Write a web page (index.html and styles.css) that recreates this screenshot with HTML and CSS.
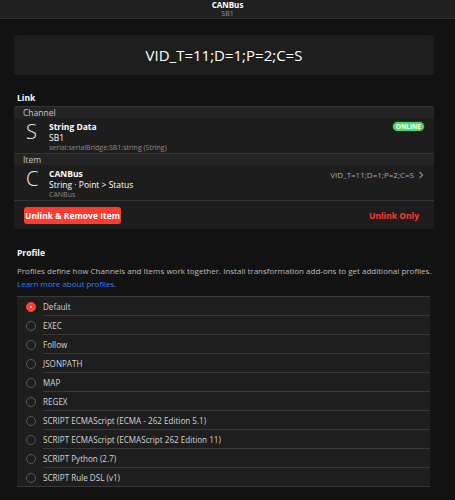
FILE: index.html
```html
<!DOCTYPE html>
<html>
<head>
<meta charset="utf-8">
<link rel="stylesheet" href="styles.css">
</head>
<body>
<header class="topbar">
  <div class="topbar-title">CANBus</div>
  <div class="topbar-sub">SB1</div>
</header>
<main class="page">
  <div class="value-card">VID_T=11;D=1;P=2;C=S</div>

  <div class="section-label">Link</div>
  <div class="link-card">
    <div class="group-head">Channel</div>
    <div class="link-row">
      <div class="letter">S</div>
      <div class="link-text">
        <div class="link-title">String Data</div>
        <div class="link-sub">SB1</div>
        <div class="link-foot">serial:serialBridge:SB1:string (String)</div>
      </div>
      <div class="badge">ONLINE</div>
    </div>
    <div class="group-head">Item</div>
    <div class="link-row">
      <div class="letter">C</div>
      <div class="link-text">
        <div class="link-title">CANBus</div>
        <div class="link-sub">String · Point &gt; Status</div>
        <div class="link-foot">CANBus</div>
      </div>
      <div class="link-value">VID_T=11;D=1;P=2;C=S
        <svg class="chev" width="6" height="8" viewBox="0 0 6 8"><path d="M1.5 1 L4.5 4 L1.5 7" fill="none" stroke="#8a8a8a" stroke-width="1.2"/></svg>
      </div>
    </div>
    <div class="actions">
      <button class="btn-danger">Unlink &amp; Remove Item</button>
      <button class="btn-link">Unlink Only</button>
    </div>
  </div>

  <div class="profile">
    <div class="section-label profile-label">Profile</div>
    <p class="desc">Profiles define how Channels and Items work together. Install transformation add-ons to get additional profiles.<br><a class="learn" href="#">Learn more about profiles.</a></p>
    <ul class="radio-list">
      <li class="radio-row selected"><span class="radio"></span><span class="radio-label">Default</span></li>
      <li class="radio-row"><span class="radio"></span><span class="radio-label">EXEC</span></li>
      <li class="radio-row"><span class="radio"></span><span class="radio-label">Follow</span></li>
      <li class="radio-row"><span class="radio"></span><span class="radio-label">JSONPATH</span></li>
      <li class="radio-row"><span class="radio"></span><span class="radio-label">MAP</span></li>
      <li class="radio-row"><span class="radio"></span><span class="radio-label">REGEX</span></li>
      <li class="radio-row"><span class="radio"></span><span class="radio-label">SCRIPT ECMAScript (ECMA - 262 Edition 5.1)</span></li>
      <li class="radio-row"><span class="radio"></span><span class="radio-label">SCRIPT ECMAScript (ECMAScript 262 Edition 11)</span></li>
      <li class="radio-row"><span class="radio"></span><span class="radio-label">SCRIPT Python (2.7)</span></li>
      <li class="radio-row last"><span class="radio"></span><span class="radio-label">SCRIPT Rule DSL (v1)</span></li>
    </ul>
  </div>
</main>
</body>
</html>
```

FILE: styles.css
```css
* { box-sizing: border-box; }
html, body { margin: 0; padding: 0; }
body {
  background: #121212;
  color: #ffffff;
  font-family: "Open Sans", "Noto Sans", sans-serif;
  width: 455px;
  height: 500px;
  overflow: hidden;
}
.topbar {
  height: 19px;
  background: #202020;
  border-bottom: 1px solid #2e2e2e;
  box-shadow: 0 1px 0 #0c0c0c;
  text-align: center;
}
.topbar-title {
  font-size: 8px;
  font-weight: 700;
  line-height: 9px;
}
.topbar-sub {
  font-size: 7px;
  line-height: 8px;
  margin-top: 1px;
  color: #9a9a9a;
}
.page {
  padding: 0 21px 0 14px;
}
.value-card {
  margin-top: 16px;
  height: 40px;
  background: #1e1e1e;
  border-radius: 3px;
  display: flex;
  align-items: center;
  justify-content: center;
  font-size: 15px;
  color: #ffffff;
}
.section-label {
  font-size: 8.5px;
  font-weight: 700;
  line-height: 12px;
  margin-top: 17px;
  padding-left: 3px;
  height: 14px;
}
.link-card {
  background: #1d1d1d;
  border-radius: 3px;
  overflow: hidden;
}
.group-head {
  background: #242424;
  border-top: 1px solid #353535;
  height: 12px;
  font-size: 8.5px;
  line-height: 11px;
  color: #c8c8c8;
  padding-left: 9px;
}
.link-row {
  display: flex;
  align-items: flex-start;
  height: 35px;
  padding-left: 12px;
  padding-right: 10px;
}
.letter {
  width: 23px;
  font-size: 20px;
  font-weight: 300;
  line-height: 20px;
  margin-top: 4px;
  color: #eeeeee;
}
.link-text { flex: 1; padding-top: 3px; }
.link-title { font-size: 8.5px; font-weight: 700; line-height: 11px; }
.link-sub { font-size: 8.5px; line-height: 11px; }
.link-foot { font-size: 7px; line-height: 9px; color: #8c8c8c; }
.badge {
  margin-top: 3px;
  background: #4cd964;
  color: #fff;
  font-size: 6.5px;
  font-weight: 700;
  line-height: 9px;
  height: 11px;
  padding: 0 3px;
  border-radius: 6px;
  border: 1px solid #0e3a16;
  margin-right: -1px;
}
.link-value {
  font-size: 8px;
  color: #a8a8a8;
  padding-top: 4px;
  display: flex;
  align-items: center;
  gap: 4px;
}
.chev { margin-top: 1px; }
.actions {
  border-top: 1px solid #353535;
  height: 29px;
  display: flex;
  align-items: center;
  justify-content: space-between;
  padding: 0 15px 0 10px;
}
.btn-danger {
  background: #ff3b30;
  color: #fff;
  border: none;
  border-radius: 3px;
  font-family: inherit;
  font-size: 8.5px;
  font-weight: 700;
  height: 17px;
  width: 97px;
  padding: 0;
  margin-top: 1px;
}
.btn-link {
  background: none;
  border: none;
  color: #ff3b30;
  font-family: inherit;
  font-size: 8.5px;
  font-weight: 700;
  padding: 0;
  margin-top: 1px;
}
.profile { padding-left: 3px; width: 416px; }
.profile-label { margin-top: 18px; padding-left: 0; height: auto; line-height: 12px; }
.desc {
  margin: 6px 0 0 0;
  font-size: 8px;
  line-height: 12.5px;
  color: #bdbdbd;
  white-space: nowrap;
}
.learn { color: #2d7ff9; text-decoration: none; }
.radio-list {
  list-style: none;
  margin: 6px 0 0 0;
  padding: 0;
  width: 413px;
  background: #1e1e1e;
  border-top: 1px solid #393939;
}
.radio-row {
  display: flex;
  align-items: center;
  height: 19px;
  position: relative;
  font-size: 8.1px;
  color: #d4d4d4;
}
.radio-row::after {
  content: "";
  position: absolute;
  left: 26px;
  right: 0;
  bottom: 0;
  height: 1px;
  background: #383838;
}
.radio-row.last::after { left: 0; }
.radio {
  width: 10px;
  height: 10px;
  border-radius: 50%;
  border: 1px solid #5a5a5a;
  margin: 0 7px 0 9px;
  flex: none;
}
.selected .radio {
  background: #ff3b30;
  border-color: #ff3b30;
  box-shadow: inset 0 0 0 3px #ff3b30, inset 0 0 0 8px #ffffff;
}
```
